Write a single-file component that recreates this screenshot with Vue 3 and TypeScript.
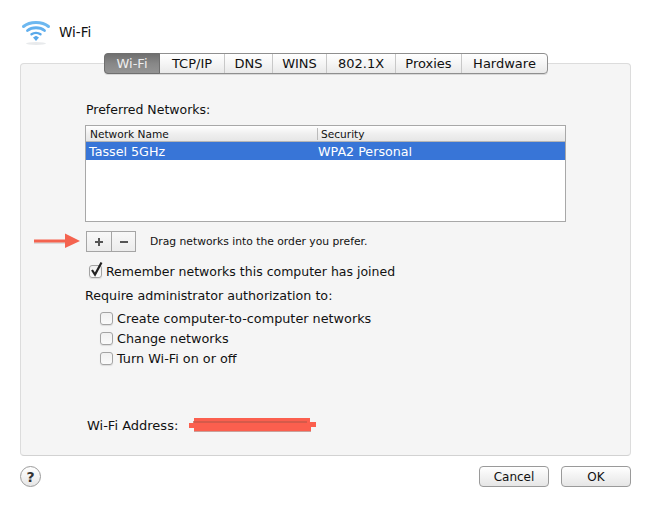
<script setup lang="ts">
const tabs = [
  { label: 'Wi-Fi', width: 56 },
  { label: 'TCP/IP', width: 65 },
  { label: 'DNS', width: 48 },
  { label: 'WINS', width: 54 },
  { label: '802.1X', width: 69 },
  { label: 'Proxies', width: 66 },
  { label: 'Hardware', width: 85 },
]
const adminOptions = ['Create computer-to-computer networks', 'Change networks', 'Turn Wi-Fi on or off']
</script>

<template>
  <div class="window">
    <header class="title-row">
      <svg class="wifi-icon" width="30" height="28" viewBox="0 0 30 28" fill="none" stroke-linecap="round">
        <ellipse cx="15" cy="25.500" rx="10" ry="1.500" fill="#e8eaec" />
        <path d="M2.500 8.500C9 3 21 3 27.500 8.500" stroke="#6db8f0" stroke-width="3" />
        <path d="M6.500 12.500C11 8.800 19 8.800 23.500 12.500" stroke="#62b0ee" stroke-width="2.800" />
        <path d="M10.500 16.300C13 14.500 17 14.500 19.500 16.300" stroke="#5aa9ea" stroke-width="2.400" />
        <path d="M12 19.500 15 17.700 18 19.500 15 23Z" fill="#58a8ea" />
      </svg>
      <span>Wi-Fi</span>
    </header>

    <div class="tabs">
      <div
        v-for="(tab, i) in tabs"
        :key="tab.label"
        class="tab"
        :class="{ active: i === 0 }"
        :style="{ width: tab.width + 'px' }"
      >{{ tab.label }}</div>
    </div>

    <section class="panel">
      <div class="label preferred">Preferred Networks:</div>

      <div class="table">
        <div class="thead">
          <div class="col-name">Network Name</div>
          <div class="col-sec">Security</div>
        </div>
        <div class="row selected">
          <div class="col-name">Tassel 5GHz</div>
          <div class="col-sec">WPA2 Personal</div>
        </div>
      </div>

      <div class="order-row">
        <svg class="arrow" width="48" height="20" viewBox="0 0 48 20">
          <path d="M0 10h32v3H0z" fill="#c9c9c9" opacity=".6" />
          <path d="M0 8.500h32v3H0z" fill="#f4634f" />
          <path d="M31 2.500 46 10 31 17Z" fill="#f4634f" />
        </svg>
        <div class="stepper">
          <button class="step">
            <svg width="10" height="10" viewBox="0 0 10 10"><path d="M5 1v8M1 5h8" stroke="#555" stroke-width="2" /></svg>
          </button>
          <button class="step">
            <svg width="10" height="10" viewBox="0 0 10 10"><path d="M1 5h8" stroke="#555" stroke-width="2" /></svg>
          </button>
        </div>
        <span class="hint">Drag networks into the order you prefer.</span>
      </div>

      <label class="check remember">
        <span class="box">
          <svg class="tick" width="15" height="17" viewBox="0 0 15 17" fill="none">
            <path d="M3 9 6 13.500 12.500 1.500" stroke="#222" stroke-width="2.200" />
          </svg>
        </span>
        Remember networks this computer has joined
      </label>

      <div class="label require">Require administrator authorization to:</div>

      <div class="options">
        <label v-for="opt in adminOptions" :key="opt" class="check">
          <span class="box"></span>
          {{ opt }}
        </label>
      </div>

      <div class="address">
        <span>Wi-Fi Address:</span>
        <svg class="redacted" width="128" height="16" viewBox="0 0 128 16">
          <path d="M0 6H5V1H121V5H127V10H122V14H5V11H0Z" fill="#fb5f4e" />
          <path d="M4 5H118" stroke="#c9584a" stroke-width="1.500" />
          <path d="M5 14.500H122" stroke="#c9a09a" stroke-width="1" />
        </svg>
      </div>
    </section>

    <footer class="footer">
      <button class="help">?</button>
      <div class="actions">
        <button class="btn">Cancel</button>
        <button class="btn">OK</button>
      </div>
    </footer>
  </div>
</template>

<style scoped>
.window {
  width: 651px;
  height: 506px;
  box-sizing: border-box;
  padding: 18px 20px 0;
  background: #fff;
  color: #111;
  font-family: "DejaVu Sans", sans-serif;
  font-size: 12.500px;
  overflow: hidden;
}

.title-row {
  display: flex;
  align-items: center;
  height: 28px;
  gap: 8px;
  margin-left: 1px;
  font-size: 13.500px;
}

.tabs {
  position: relative;
  z-index: 1;
  display: flex;
  width: max-content;
  height: 21px;
  margin: 7px 0 -11px 84px;
  box-sizing: border-box;
  border: 1px solid #8f8f8f;
  border-radius: 4px;
  background: linear-gradient(#fff, #f6f6f6 45%, #e9e9e9);
  box-shadow: 0 1px 0 #d8d8d8;
  font-size: 13px;
}

.tab {
  display: flex;
  align-items: center;
  justify-content: center;
  box-sizing: border-box;
  border-right: 1px solid #c8c8c8;
}
.tab:last-child { border-right: 0; }
.tab.active {
  margin: -1px 0 -1px -1px;
  border: 1px solid #6f6f6f;
  border-radius: 4px 0 0 4px;
  background: linear-gradient(#6f6f6f, #878787 50%, #949494);
  color: #eee;
}

.panel {
  height: 393px;
  box-sizing: border-box;
  border: 1px solid #dcdcdc;
  border-bottom-color: #d2d2d2;
  border-radius: 4px;
  background: #f5f5f5;
  padding: 38px 64px 0;
}

.label { line-height: 16px; }
.preferred { margin-left: 1px; }

.table {
  width: 481px;
  height: 97px;
  box-sizing: border-box;
  margin-top: 7px;
  border: 1px solid #a8a8a8;
  background: #fff;
}
.thead {
  display: flex;
  align-items: center;
  height: 15px;
  border-bottom: 1px solid #b5b5b5;
  background: linear-gradient(#fff, #f0f0f0 50%, #e6e6e6);
  font-size: 10.600px;
}
.thead .col-name { width: 232px; padding-left: 4px; border-right: 1px solid #bbb; box-sizing: border-box; }
.thead .col-sec { padding-left: 3px; }
.row {
  display: flex;
  align-items: center;
  height: 18px;
  font-size: 12.700px;
}
.row.selected { background: #3875d7; color: #fff; }
.row .col-name { width: 232px; padding-left: 3px; box-sizing: border-box; }

.order-row {
  position: relative;
  display: flex;
  align-items: center;
  height: 21px;
  margin: 9px 0 0 1px;
}
.arrow {
  position: absolute;
  left: -52px;
  top: 0;
}
.stepper {
  display: flex;
  width: 50px;
  height: 21px;
  box-sizing: border-box;
  border: 1px solid #a5a5a5;
  background: linear-gradient(#f8f8f8, #ececec);
}
.step {
  display: flex;
  align-items: center;
  justify-content: center;
  padding: 0;
  border: 0;
  background: none;
  flex: 1;
}
.step:first-child { border-right: 1px solid #a5a5a5; flex: 0 0 25px; }
.hint { margin-left: 14px; font-size: 10.750px; }

.check {
  display: flex;
  align-items: center;
  height: 20px;
  gap: 4px;
}
.box {
  position: relative;
  flex: none;
  width: 13px;
  height: 13px;
  box-sizing: border-box;
  border: 1px solid #a3a3a3;
  border-radius: 3px;
  background: linear-gradient(#f0f0f0, #fafafa);
  box-shadow: 0 1px 1px #ddd;
}
.tick { position: absolute; left: -1px; top: -5px; }
.remember { margin: 9px 0 0 3px; }
.remember .box { margin-left: 1px; }
.require { margin-top: 7px; font-size: 12.700px; }
.options { margin: 4px 0 0 15px; font-size: 12.800px; }

.address {
  display: flex;
  align-items: center;
  height: 16px;
  margin: 49px 0 0 2px;
  font-size: 13px;
}
.redacted {
  flex: none;
  margin-left: 11px;
}

.footer {
  display: flex;
  justify-content: space-between;
  margin-top: 10px;
}
.help {
  width: 21px;
  height: 21px;
  padding: 0;
  border: 1px solid #9b9b9b;
  border-radius: 50%;
  background: linear-gradient(#fff, #e6e6e6);
  color: #333;
  font: bold 14px "DejaVu Sans", sans-serif;
}
.actions { display: flex; gap: 12px; }
.btn {
  width: 70px;
  height: 21px;
  padding: 0;
  border: 1px solid #9a9a9a;
  border-radius: 4px;
  background: linear-gradient(#fff, #f2f2f2 50%, #e6e6e6);
  color: #111;
  font: 12px "DejaVu Sans", sans-serif;
}
</style>
